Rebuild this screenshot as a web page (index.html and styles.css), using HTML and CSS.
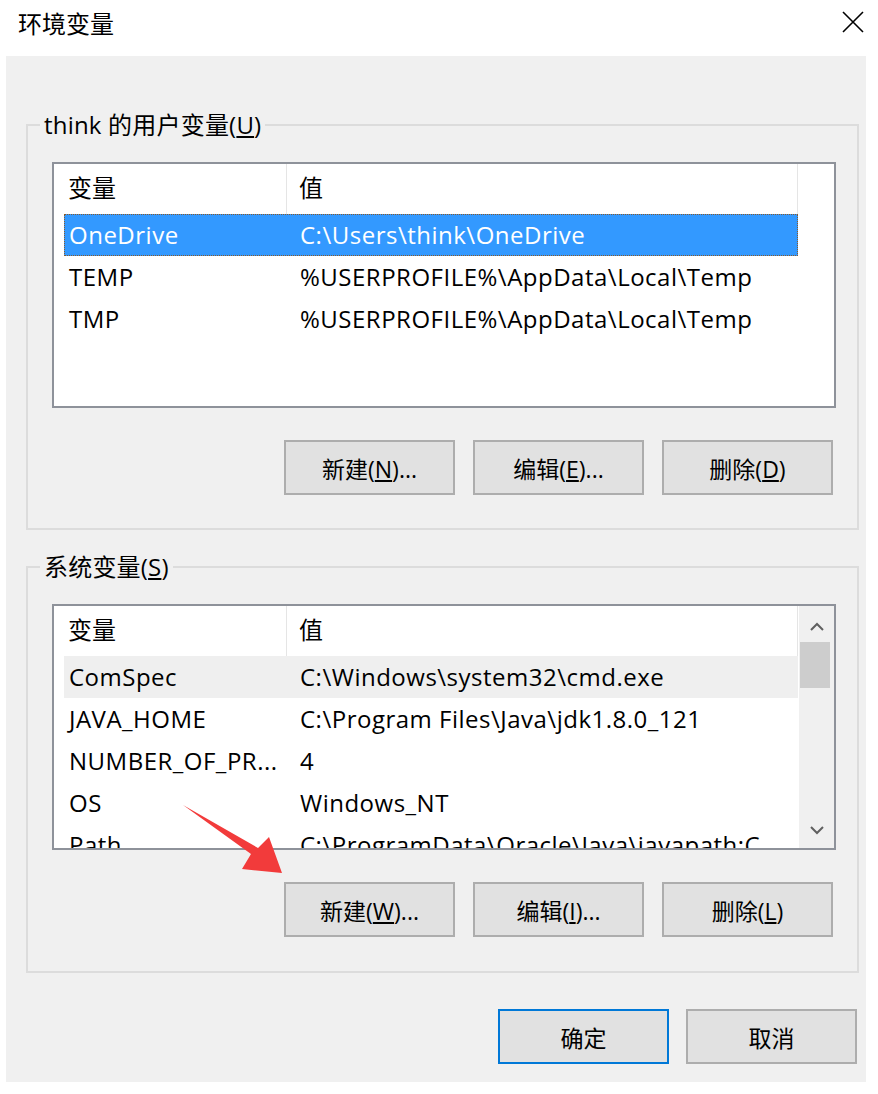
FILE: index.html
```html
<!DOCTYPE html>
<html lang="zh-CN">
<head>
<meta charset="utf-8">
<title>环境变量</title>
<link rel="stylesheet" href="styles.css">
</head>
<body>
<div class="titlebar">
  <span class="title">环境变量</span>
  <svg class="close" width="22" height="22" viewBox="0 0 22 22"><path d="M1 1 L21 21 M21 1 L1 21" stroke="#000" stroke-width="1.6" fill="none"/></svg>
</div>
<div class="panel">
  <fieldset class="group">
    <legend>think 的用户变量(<u>U</u>)</legend>
    <div class="list">
      <div class="cols">
        <div class="head"><span class="c1">变量</span><span class="c2">值</span></div>
        <div class="row selected"><span class="c1">OneDrive</span><span class="c2">C:\Users\think\OneDrive</span></div>
        <div class="row"><span class="c1">TEMP</span><span class="c2">%USERPROFILE%\AppData\Local\Temp</span></div>
        <div class="row"><span class="c1">TMP</span><span class="c2">%USERPROFILE%\AppData\Local\Temp</span></div>
      </div>
    </div>
    <div class="btns">
      <button class="btn">新建(<u>N</u>)...</button>
      <button class="btn">编辑(<u>E</u>)...</button>
      <button class="btn">删除(<u>D</u>)</button>
    </div>
  </fieldset>
  <fieldset class="group group2">
    <legend>系统变量(<u>S</u>)</legend>
    <div class="list">
      <div class="cols">
        <div class="head"><span class="c1">变量</span><span class="c2">值</span></div>
        <div class="row hover"><span class="c1">ComSpec</span><span class="c2">C:\Windows\system32\cmd.exe</span></div>
        <div class="row"><span class="c1">JAVA_HOME</span><span class="c2">C:\Program Files\Java\jdk1.8.0_121</span></div>
        <div class="row"><span class="c1">NUMBER_OF_PR...</span><span class="c2">4</span></div>
        <div class="row"><span class="c1">OS</span><span class="c2">Windows_NT</span></div>
        <div class="row"><span class="c1">Path</span><span class="c2">C:\ProgramData\Oracle\Java\javapath;C</span></div>
      </div>
      <div class="scrollbar">
        <div class="sb-btn up"><svg width="16" height="10" viewBox="0 0 16 10"><polyline points="2,8 8,2 14,8" fill="none" stroke="#606060" stroke-width="2"/></svg></div>
        <div class="thumb"></div>
        <div class="track"></div>
        <div class="sb-btn down"><svg width="16" height="10" viewBox="0 0 16 10"><polyline points="2,2 8,8 14,2" fill="none" stroke="#606060" stroke-width="2"/></svg></div>
      </div>
    </div>
    <div class="btns">
      <button class="btn">新建(<u>W</u>)...</button>
      <button class="btn">编辑(<u>I</u>)...</button>
      <button class="btn">删除(<u>L</u>)</button>
    </div>
  </fieldset>
  <div class="footer">
    <button class="btn primary">确定</button>
    <button class="btn">取消</button>
  </div>
</div>
<svg class="arrow" width="112" height="84" viewBox="0 0 112 84">
  <polygon points="5,7 73,56 64,71 104,75 91,39 80,50" fill="#f23b3b"/>
</svg>
</body>
</html>
```
FILE: styles.css
```css
html, body {
  margin: 0;
  padding: 0;
}
body {
  background: #ffffff;
  font-family: "Open Sans", "Noto Sans CJK SC", sans-serif;
  font-size: 24px;
  color: #000;
  width: 878px;
  height: 1094px;
  overflow: hidden;
}
.titlebar {
  height: 56px;
  box-sizing: border-box;
  display: flex;
  align-items: flex-start;
  justify-content: space-between;
  padding: 8px 14px 0 18px;
}
.title {
  font-size: 24px;
  line-height: 32px;
}
.close {
  margin-top: 3px;
}
.panel {
  margin: 0 12px 0 6px;
  background: #f0f0f0;
  padding: 55px 0 18px 0;
}
.group {
  margin: 0 7px 0 20px;
  padding: 0 21px 33px 24px;
  border: 2px solid #dcdcdc;
}
.group2 {
  margin-top: 23px;
  padding-bottom: 34px;
}
.group legend {
  margin-left: -12px;
  padding: 0 4px;
  line-height: 28px;
  font-size: 24px;
  letter-spacing: 0.2px;
}
.list {
  margin-top: 23px;
  height: 246px;
  box-sizing: border-box;
  border: 2px solid #8e929a;
  background: #fff;
  display: flex;
  overflow: hidden;
}
.cols {
  width: 745px;
  flex: none;
}
.head {
  display: flex;
  height: 50px;
  line-height: 48px;
  width: 744px;
  border-right: 1px solid #e5e5e5;
  box-sizing: border-box;
}
.head .c1 {
  width: 233px;
  padding-left: 14px;
  box-sizing: border-box;
  border-right: 1px solid #e5e5e5;
  flex: none;
}
.head .c2 {
  padding-left: 12px;
}
.row {
  display: flex;
  height: 42px;
  line-height: 42px;
  margin-left: 10px;
  width: 734px;
  white-space: nowrap;
  overflow: hidden;
  box-sizing: border-box;
  letter-spacing: 0.5px;
}
.row .c1 {
  width: 223px;
  padding-left: 5px;
  box-sizing: border-box;
  flex: none;
}
.row .c2 {
  padding-left: 13px;
}
.row.selected {
  background: #3399ff;
  color: #fff;
  outline: 1px dotted #8a5a2a;
  outline-offset: -1px;
}
.row.hover {
  background: #efefef;
}
.scrollbar {
  width: 35px;
  flex: none;
  background: #f0f0f0;
  display: flex;
  flex-direction: column;
}
.sb-btn {
  height: 36px;
  display: flex;
  align-items: center;
  justify-content: center;
  flex: none;
}
.sb-btn.up {
  padding-top: 6px;
  box-sizing: border-box;
}
.thumb {
  height: 46px;
  margin: 0 4px 0 1px;
  background: #cdcdcd;
  flex: none;
}
.track {
  flex: 1;
}
.btns {
  display: flex;
  justify-content: flex-end;
  gap: 18px;
  margin-top: 32px;
  margin-right: 3px;
}
.btn {
  width: 171px;
  height: 55px;
  box-sizing: border-box;
  background: #e1e1e1;
  border: 2px solid #adadad;
  font-family: "Open Sans", "Noto Sans CJK SC", sans-serif;
  font-size: 23px;
  color: #000;
  padding: 0;
  margin: 0;
}
.btn.primary {
  border-color: #0078d7;
}
.footer {
  display: flex;
  justify-content: flex-end;
  gap: 17px;
  margin-top: 36px;
  margin-right: 9px;
}
.arrow {
  position: absolute;
  left: 178px;
  top: 798px;
}
```
